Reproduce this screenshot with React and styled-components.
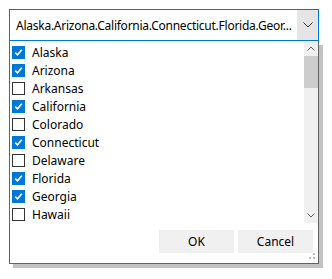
import React, { useState } from "react";
import styled, { createGlobalStyle } from "styled-components";

const Global = createGlobalStyle`
  html, body { margin: 0; padding: 0; background: #ffffff; }
  body { font-family: "Noto Sans", "Open Sans", sans-serif; font-size: 12px; color: #000; }
`;

const Page = styled.div`
  padding: 9px;
  width: 332px;
  height: 279px;
  box-sizing: border-box;
`;

const Combo = styled.div`
  display: flex;
  width: 310px;
  height: 32px;
  box-sizing: border-box;
  border: 1px solid #0078d7;
`;

const ComboText = styled.div`
  flex: 1;
  display: flex;
  align-items: center;
  padding-left: 6px;
  white-space: nowrap;
  overflow: hidden;
  font-size: 12px;
  letter-spacing: -0.25px;
`;

const ComboButton = styled.div`
  width: 21px;
  background: #e5e5e5;
  display: flex;
  align-items: center;
  justify-content: center;
`;

const Panel = styled.div`
  width: 310px;
  height: 223px;
  box-sizing: border-box;
  border: 1px solid #646464;
  border-top: none;
  box-shadow: 4px 4px 0 #c2c2c2;
  display: flex;
  flex-direction: column;
  background: #fff;
`;

const ListArea = styled.div`
  display: flex;
  height: 182px;
`;

const List = styled.div`
  flex: 1;
  padding-top: 2px;
  overflow: hidden;
`;

const Row = styled.label`
  display: flex;
  align-items: center;
  height: 18px;
  padding-left: 2px;
  cursor: default;
`;

const Box = styled.span`
  width: 13px;
  height: 13px;
  box-sizing: border-box;
  border: 1px solid ${(p) => (p.$checked ? "#0078d7" : "#333333")};
  background: ${(p) => (p.$checked ? "#0078d7" : "#ffffff")};
  display: flex;
  align-items: center;
  justify-content: center;
  margin-right: 7px;
`;

const Scrollbar = styled.div`
  width: 14px;
  background: #f0f0f0;
  display: flex;
  flex-direction: column;
`;

const ArrowBox = styled.div`
  height: 15px;
  display: flex;
  align-items: center;
  justify-content: center;
`;

const Thumb = styled.div`
  height: 32px;
  background: #cdcdcd;
`;

const Track = styled.div`
  flex: 1;
`;

const Footer = styled.div`
  flex: 1;
  display: flex;
  justify-content: flex-end;
  align-items: flex-start;
  padding-top: 7px;
  padding-right: 5px;
  gap: 4px;
  position: relative;
`;

const Button = styled.button`
  width: 75px;
  height: 23px;
  border: none;
  background: #f0f0f0;
  font-family: "Noto Sans", "Open Sans", sans-serif;
  font-size: 12px;
  color: #000;
  padding: 0;
`;

const Grip = styled.svg`
  position: absolute;
  right: 3px;
  bottom: 3px;
`;

const states = [
  ["Alaska", true],
  ["Arizona", true],
  ["Arkansas", false],
  ["California", true],
  ["Colorado", false],
  ["Connecticut", true],
  ["Delaware", false],
  ["Florida", true],
  ["Georgia", true],
  ["Hawaii", false],
];

const Check = () => (
  <svg width="9" height="9" viewBox="0 0 9 9">
    <path d="M1.2 4.6 L3.5 6.8 L7.8 1.8" fill="none" stroke="#fff" strokeWidth="1.6" />
  </svg>
);

export default function App() {
  const [items, setItems] = useState(states);
  const toggle = (i) =>
    setItems((arr) => arr.map((it, j) => (j === i ? [it[0], !it[1]] : it)));
  return (
    <Page>
      <Global />
      <Combo>
        <ComboText>Alaska.Arizona.California.Connecticut.Florida.Geor...</ComboText>
        <ComboButton>
          <svg width="10" height="6" viewBox="0 0 10 6">
            <path d="M0.5 0.5 L5 5 L9.5 0.5" fill="none" stroke="#333" strokeWidth="1" />
          </svg>
        </ComboButton>
      </Combo>
      <Panel>
        <ListArea>
          <List>
            {items.map(([name, checked], i) => (
              <Row key={name} onClick={() => toggle(i)}>
                <Box $checked={checked}>{checked && <Check />}</Box>
                {name}
              </Row>
            ))}
          </List>
          <Scrollbar>
            <ArrowBox>
              <svg width="8" height="5" viewBox="0 0 8 5">
                <path d="M0.5 4.5 L4 1 L7.5 4.5" fill="none" stroke="#606060" strokeWidth="1" />
              </svg>
            </ArrowBox>
            <Thumb />
            <Track />
            <ArrowBox>
              <svg width="8" height="5" viewBox="0 0 8 5">
                <path d="M0.5 0.5 L4 4 L7.5 0.5" fill="none" stroke="#606060" strokeWidth="1" />
              </svg>
            </ArrowBox>
          </Scrollbar>
        </ListArea>
        <Footer>
          <Button>OK</Button>
          <Button>Cancel</Button>
          <Grip width="7" height="7" viewBox="0 0 7 7">
            <rect x="5" y="0" width="2" height="2" fill="#bfbfbf" />
            <rect x="1" y="4" width="2" height="2" fill="#bfbfbf" />
            <rect x="5" y="4" width="2" height="2" fill="#bfbfbf" />
          </Grip>
        </Footer>
      </Panel>
    </Page>
  );
}
